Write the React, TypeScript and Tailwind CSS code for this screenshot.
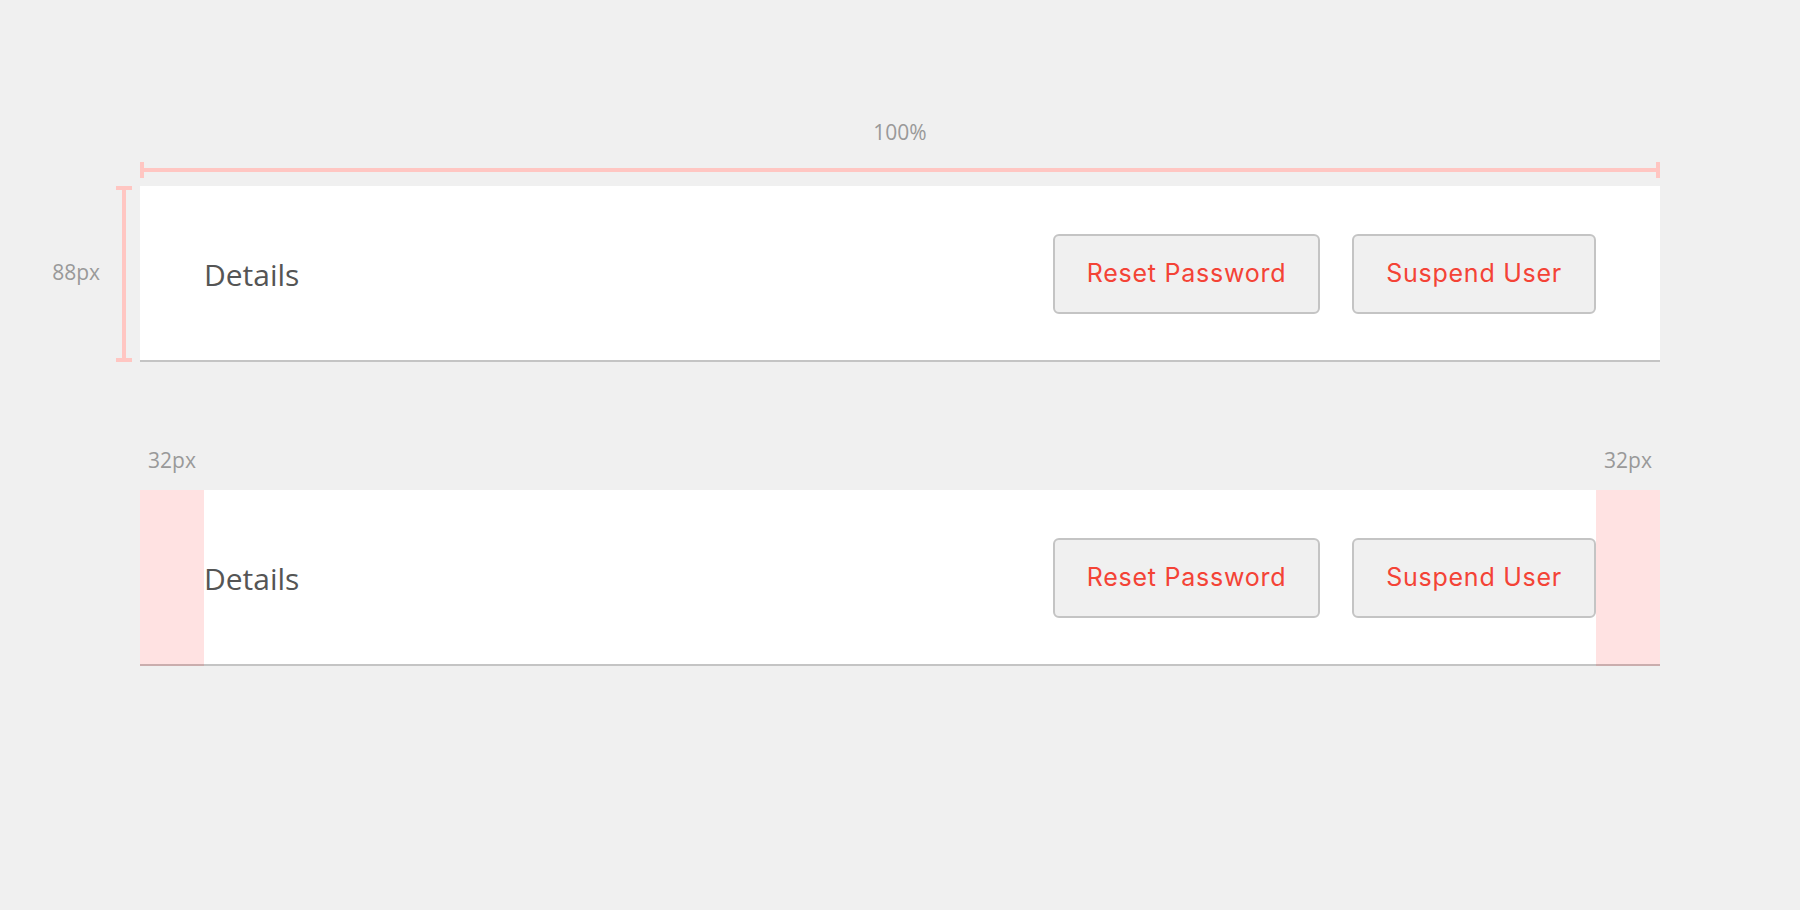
const measure = 'bg-[#ffc6c2]'

function Actions() {
  return (
    <div className="mt-0.5 flex items-center gap-8">
      <button className="h-20 px-8 rounded-md border-2 border-[#c4c4c4] bg-[#f0f0f0] text-[25px] font-normal text-[#f44336] font-['Inter',sans-serif] tracking-[0.03em]">
        Reset Password
      </button>
      <button className="h-20 px-8 rounded-md border-2 border-[#c4c4c4] bg-[#f0f0f0] text-[25px] font-normal text-[#f44336] font-['Inter',sans-serif] tracking-[0.03em]">
        Suspend User
      </button>
    </div>
  )
}

function Title() {
  return <span className="mt-1 text-[30px] leading-none text-[#555] font-['Open_Sans',sans-serif]">Details</span>
}

export default function App() {
  return (
    <div className="min-h-screen bg-[#f0f0f0] px-[140px] pt-[117px] font-['Open_Sans',sans-serif]">
      {/* width annotation */}
      <div className="text-center text-[21px] leading-[30px] text-[#999]">100%</div>
      <div className="mt-[15px] flex h-4 items-center">
        <div className={`h-4 w-1 ${measure}`} />
        <div className={`h-1 flex-1 ${measure}`} />
        <div className={`h-4 w-1 ${measure}`} />
      </div>

      {/* panel with height annotation */}
      <div className="relative mt-2 flex h-[176px] items-center justify-between border-b-2 border-[#c4c4c4] bg-white px-16">
        <div className="absolute right-full top-0 bottom-[-2px] mr-2 flex items-center gap-4">
          <span className="-mt-1 text-[21px] leading-[30px] text-[#999]">88px</span>
          <div className="flex h-full w-4 flex-col items-center">
            <div className={`h-1 w-4 ${measure}`} />
            <div className={`w-1 flex-1 ${measure}`} />
            <div className={`h-1 w-4 ${measure}`} />
          </div>
        </div>
        <Title />
        <Actions />
      </div>

      {/* padding annotation */}
      <div className="mt-[83px] flex justify-between text-[21px] leading-[30px] text-[#999]">
        <span className="w-16 text-center">32px</span>
        <span className="w-16 text-center">32px</span>
      </div>

      <div className="relative mt-[15px] flex h-[176px] items-center justify-between border-b-2 border-[#c4c4c4] bg-white px-16">
        <div className="absolute left-0 top-0 bottom-[-2px] w-16 bg-[rgba(255,0,0,0.115)]" />
        <div className="absolute right-0 top-0 bottom-[-2px] w-16 bg-[rgba(255,0,0,0.115)]" />
        <Title />
        <Actions />
      </div>
    </div>
  )
}
